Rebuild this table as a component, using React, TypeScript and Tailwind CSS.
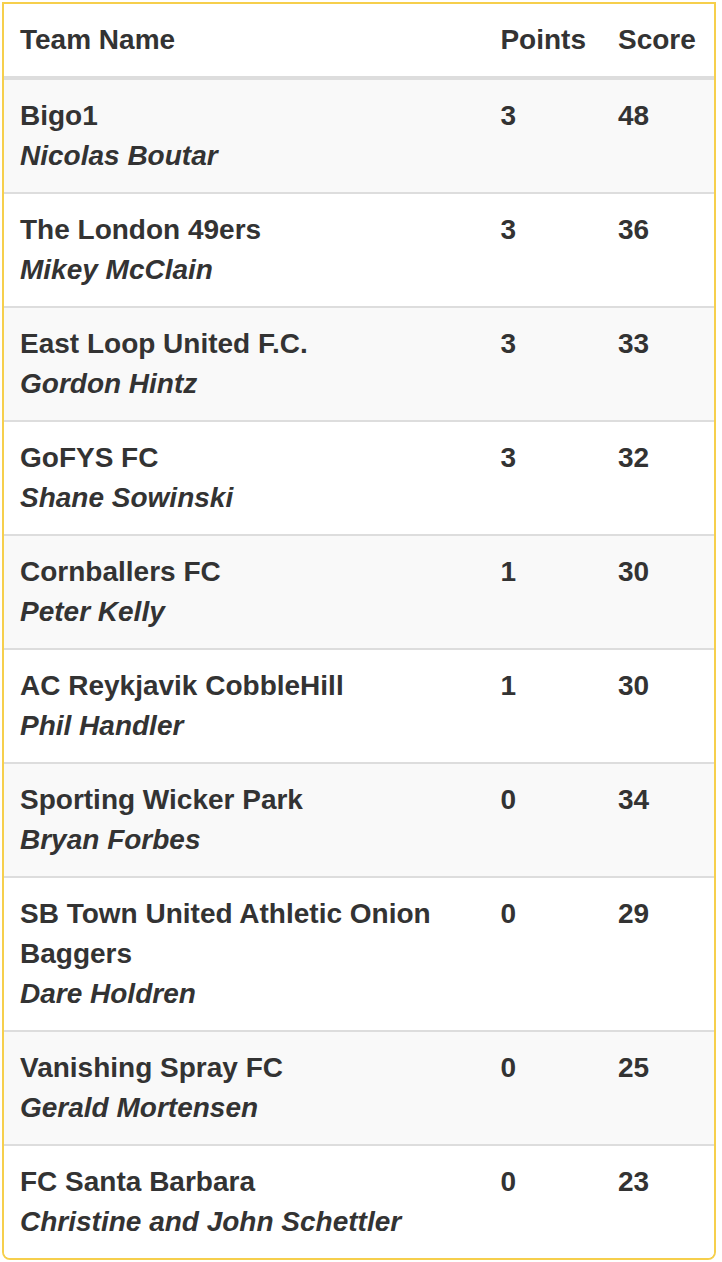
import React from 'react';

interface TeamRow {
  team: string;
  manager: string;
  points: number;
  score: number;
}

const rows: TeamRow[] = [
  { team: 'Bigo1', manager: 'Nicolas Boutar', points: 3, score: 48 },
  { team: 'The London 49ers', manager: 'Mikey McClain', points: 3, score: 36 },
  { team: 'East Loop United F.C.', manager: 'Gordon Hintz', points: 3, score: 33 },
  { team: 'GoFYS FC', manager: 'Shane Sowinski', points: 3, score: 32 },
  { team: 'Cornballers FC', manager: 'Peter Kelly', points: 1, score: 30 },
  { team: 'AC Reykjavik CobbleHill', manager: 'Phil Handler', points: 1, score: 30 },
  { team: 'Sporting Wicker Park', manager: 'Bryan Forbes', points: 0, score: 34 },
  { team: 'SB Town United Athletic Onion Baggers', manager: 'Dare Holdren', points: 0, score: 29 },
  { team: 'Vanishing Spray FC', manager: 'Gerald Mortensen', points: 0, score: 25 },
  { team: 'FC Santa Barbara', manager: 'Christine and John Schettler', points: 0, score: 23 },
];

export default function App() {
  return (
    <div className="min-h-screen bg-white pt-[2px] pl-[2px]" style={{ fontFamily: '"Liberation Sans", Arial, sans-serif' }}>
      <div className="w-[714px] border-2 border-[#f6cf4c] rounded-b-lg overflow-hidden">
        <table className="w-full border-separate border-spacing-0 text-[28px] leading-[40px] font-bold text-[#333]">
          <thead>
            <tr>
              <th className="p-4 text-left align-bottom border-b-4 border-[#dddddd]">Team Name</th>
              <th className="w-[117px] p-4 text-left align-bottom border-b-4 border-[#dddddd]">Points</th>
              <th className="w-[112px] p-4 text-left align-bottom border-b-4 border-[#dddddd]">Score</th>
            </tr>
          </thead>
          <tbody>
            {rows.map((row, i) => {
              const striped = i % 2 === 0 ? 'bg-[#f9f9f9]' : 'bg-white';
              const border = i < rows.length - 1 ? 'border-b-2 border-[#dddddd]' : '';
              return (
                <tr key={row.team} className={striped}>
                  <td className={`p-4 align-top ${border}`}>
                    <div>{row.team}</div>
                    <div className="italic">{row.manager}</div>
                  </td>
                  <td className={`p-4 align-top ${border}`}>{row.points}</td>
                  <td className={`p-4 align-top ${border}`}>{row.score}</td>
                </tr>
              );
            })}
          </tbody>
        </table>
      </div>
    </div>
  );
}
